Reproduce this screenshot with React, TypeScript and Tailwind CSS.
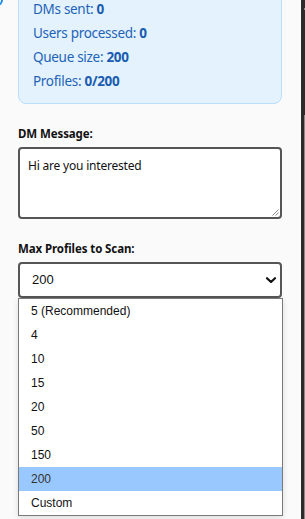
import React from "react";

const options = ["5 (Recommended)", "4", "10", "15", "20", "50", "150", "200", "Custom"];

export default function App() {
  return (
    <div className="flex h-[519px] w-[305px] overflow-hidden bg-[#fafafa]">
      <div className="relative h-full w-[301px] overflow-hidden" style={{ fontFamily: '"Noto Sans", sans-serif' }}>
        <div className="absolute -left-[3px] -top-[3px] h-[9px] w-[6px] rounded-br-[6px] border-b-2 border-r-2 border-[#1e88e5]" />
        <div className="px-[18px] pr-[19px]">
          <div className="-mt-[14px] rounded-[8px] border border-[#bbdefb] bg-[#e3f2fd] px-[14px] py-[10px] text-[13.5px] leading-[24px] tracking-[-0.3px] text-[#1f63b8]">
            <div>DMs sent: <b className="text-[#1a5cb0]">0</b></div>
            <div>Users processed: <b className="text-[#1a5cb0]">0</b></div>
            <div>Queue size: <b className="text-[#1a5cb0]">200</b></div>
            <div>Profiles: <b className="text-[#1a5cb0]">0/200</b></div>
          </div>

          <div className="mt-[21px] text-[11.5px] font-bold leading-[18px] tracking-[-0.1px] text-[#111]">DM Message:</div>
          <div className="relative mt-[4px] h-[72px] rounded-[4px] border-2 border-[#555] bg-white px-[8px] py-[8px] text-[12px] leading-[18px] tracking-[-0.2px] text-[#111]">
            Hi are you interested
            <svg className="absolute bottom-[1px] right-[1px]" width="7" height="7" viewBox="0 0 7 7">
              <line x1="6.5" y1="0.5" x2="0.5" y2="6.5" stroke="#888" strokeWidth="1" />
              <line x1="6.5" y1="3.5" x2="3.5" y2="6.5" stroke="#888" strokeWidth="1" />
            </svg>
          </div>

          <div className="mt-[21px] text-[11.5px] font-bold leading-[18px] tracking-[-0.1px] text-[#111]">Max Profiles to Scan:</div>
          <div className="relative mt-[4px]">
            <div
              className="flex h-[36px] items-center justify-between rounded-[4px] border-2 border-[#555] bg-white pl-[12px] pr-[3px] text-[13px] text-[#111]"
              style={{ fontFamily: '"Liberation Sans", Arial, sans-serif' }}
            >
              <span>200</span>
              <svg width="12" height="12" viewBox="0 0 12 12">
                <path d="M2 4.2 L6 8 L10 4.2" fill="none" stroke="#111" strokeWidth="2.2" strokeLinecap="round" strokeLinejoin="round" />
              </svg>
            </div>
            <div
              className="absolute left-0 top-[36px] z-10 w-[265px] border border-[#7a7a7a] bg-white text-[12px] text-[#111] shadow-[0_2px_6px_rgba(0,0,0,0.12)]"
              style={{ fontFamily: '"Liberation Sans", Arial, sans-serif' }}
            >
              {options.map((o) => (
                <div
                  key={o}
                  className={
                    o === "200"
                      ? "flex h-[24px] items-center bg-[#99c8ff] pl-[12px] text-[#333]"
                      : "flex h-[24px] items-center pl-[12px]"
                  }
                >
                  {o}
                </div>
              ))}
            </div>
          </div>
        </div>
      </div>
      <div className="relative h-full w-[4px] bg-[#2b2b2b]">
        <div className="absolute right-0 top-[115px] h-[404px] w-[1px] bg-[#8a8a8a]" />
        <div className="absolute left-[3px] top-[8px] h-[2px] w-[1px] bg-[#888]" />
      </div>
    </div>
  );
}
